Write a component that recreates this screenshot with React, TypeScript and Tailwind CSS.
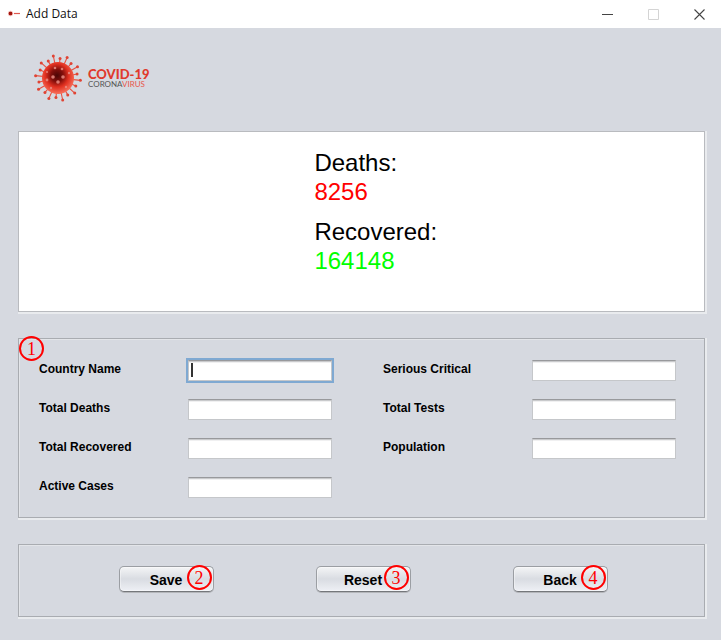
import type { ReactNode } from "react";

const SPIKES = Array.from({ length: 20 }, (_, i) => {
  const angle = ((i * 18 + 6) * Math.PI) / 180;
  const reach = i % 2 === 0 ? 22.5 : 19.5;
  return { x: 24 + Math.cos(angle) * reach, y: 24 + Math.sin(angle) * reach };
});

const KNOBS = [
  [19, 23, 1.8],
  [29, 23, 1.8],
  [24, 28, 1.8],
  [21, 14, 1.3],
  [28, 15, 1.3],
  [13, 26, 1.4],
  [35, 19, 1.2],
  [32, 33, 1.2],
  [17, 34, 1.2],
  [13, 18, 1.1],
];

function Virus() {
  return (
    <svg className="size-12 shrink-0" viewBox="0 0 48 48" aria-hidden="true">
      <defs>
        <radialGradient id="core" cx="0.47" cy="0.42" r="0.56">
          <stop offset="0" stopColor="#4a0605" />
          <stop offset="0.35" stopColor="#840f0b" />
          <stop offset="0.65" stopColor="#e03020" />
          <stop offset="1" stopColor="#f66a56" />
        </radialGradient>
      </defs>
      {SPIKES.map((s, i) => (
        <g key={i}>
          <line x1="24" y1="24" x2={s.x} y2={s.y} stroke="#e8503f" strokeWidth="1.1" />
          <circle cx={s.x} cy={s.y} r="1.5" fill="#e04434" />
        </g>
      ))}
      <circle cx="24" cy="24" r="16" fill="url(#core)" />
      {KNOBS.map(([x, y, r]) => (
        <circle key={`${x}-${y}`} cx={x} cy={y} r={r} fill="#e98a80" opacity="0.85" />
      ))}
    </svg>
  );
}

function TitleBar() {
  return (
    <header className="flex h-7 items-center justify-between bg-white pl-2 pr-4">
      <div className="flex items-center gap-1.5">
        <svg className="h-3 w-3" viewBox="0 0 12 12" aria-hidden="true">
          <circle cx="2.5" cy="5.5" r="2" fill="#a3150f" />
          <circle cx="2.5" cy="5.5" r="2.4" fill="none" stroke="#f09a92" strokeWidth="0.5" />
          <path d="M6 5.5h6" stroke="#e0584e" strokeWidth="1.2" />
        </svg>
        <h1 className="font-['Open_Sans',sans-serif] text-xs text-[#111]">Add Data</h1>
      </div>
      <div className="flex gap-[35px] text-[#444]">
        <button type="button" aria-label="Minimize">
          <svg className="size-[11px]" viewBox="0 0 11 11">
            <path d="M0 5.5h11" stroke="currentColor" />
          </svg>
        </button>
        <button type="button" aria-label="Maximize" disabled className="text-[#d4d4d4]">
          <svg className="size-[11px]" viewBox="0 0 11 11">
            <path d="M.5.5h10v10H.5z" fill="none" stroke="currentColor" />
          </svg>
        </button>
        <button type="button" aria-label="Close">
          <svg className="size-[11px]" viewBox="0 0 11 11">
            <path d="M.5.5l10 10M10.5.5l-10 10" stroke="currentColor" strokeWidth="1.1" />
          </svg>
        </button>
      </div>
    </header>
  );
}

function Marker({ children, className }: { children: ReactNode; className: string }) {
  return (
    <span
      className={`absolute flex size-[25px] items-center justify-center rounded-full border-2 border-[#f00] font-['Liberation_Serif',serif] text-lg font-normal leading-none text-[#f00] ${className}`}
    >
      {children}
    </span>
  );
}

function Field({ id, label, focused }: { id: string; label: string; focused?: boolean }) {
  return (
    <div className="flex items-start">
      <label htmlFor={id} className="w-[149px] shrink-0 text-xs leading-[18px] font-bold">
        {label}
      </label>
      <div className="relative flex">
        <input
          id={id}
          type="text"
          className={`h-[21px] w-36 border border-[#c5c7ca] border-t-[#98999c] bg-white px-1 text-xs shadow-[inset_0_1px_0_#c9cacc,inset_0_2px_0_#f0f0f1] outline-none ${
            focused ? "ring-2 ring-[#7fa9d2]" : ""
          }`}
        />
        {focused && <span className="absolute top-[3px] left-[3px] h-3.5 w-0.5 bg-[#333]" />}
      </div>
    </div>
  );
}

const ETCHED = "border border-[#a9acb1] shadow-[1px_1px_0_1px_#e9ebee,inset_1px_1px_0_#e3e5e9]";

const ACTIONS = [
  { label: "Save", marker: 2 },
  { label: "Reset", marker: 3 },
  { label: "Back", marker: 4 },
];

export default function App() {
  return (
    <div className="min-h-screen bg-[#d6d9e0] font-['Liberation_Sans',Arial,sans-serif] text-black">
      <TitleBar />
      <main className="pr-4 pl-[18px]">
        <div className="flex h-[103px] items-center gap-1.5 pl-4 pb-1">
          <Virus />
          <div className="font-['Lato',sans-serif]">
            <div className="text-[13px] leading-3 font-black text-[#e03a2d]">COVID-19</div>
            <div className="text-[8px] leading-2 text-[#555]">
              CORONA<span className="text-[#e8574b]">VIRUS</span>
            </div>
          </div>
        </div>
        <div className="flex flex-col gap-[26px]">
          <dl className="h-[181px] border border-[#b9bbbf] bg-white pt-4 pl-[43%] text-2xl leading-[29px] shadow-[1px_1px_0_1px_#e9ebee]">
            <dt>Deaths:</dt>
            <dd className="mb-[11px] text-[#f00]">8256</dd>
            <dt>Recovered:</dt>
            <dd className="text-[#0f0]">164148</dd>
          </dl>
          <form className={`relative h-[180px] pt-[21px] pl-5 ${ETCHED}`}>
            <Marker className="-top-[3px] left-0">1</Marker>
            <div className="grid grid-flow-col grid-cols-[1fr_1fr] grid-rows-4 gap-x-[23px] gap-y-[18px]">
              <Field id="country" label="Country Name" focused />
              <Field id="deaths" label="Total Deaths" />
              <Field id="recovered" label="Total Recovered" />
              <Field id="active" label="Active Cases" />
              <Field id="critical" label="Serious Critical" />
              <Field id="tests" label="Total Tests" />
              <Field id="population" label="Population" />
            </div>
          </form>
          <div className={`flex h-[73px] items-center justify-center gap-[102px] pb-[3px] pl-[3px] ${ETCHED}`}>
            {ACTIONS.map(({ label, marker }) => (
              <button
                key={label}
                type="button"
                className="relative h-[26px] w-[95px] rounded-[5px] border border-[#9b9ea3] border-b-[#75777b] bg-linear-to-b from-[#f4f5f6] via-[#d9dce2] to-[#eef0f5] pt-px text-sm font-bold shadow-[0_1px_0_#b4b6ba,inset_0_0_0_1px_#ffffff66]"
              >
                {label}
                <Marker className="-top-0.5 left-[67px]">{marker}</Marker>
              </button>
            ))}
          </div>
        </div>
      </main>
    </div>
  );
}
